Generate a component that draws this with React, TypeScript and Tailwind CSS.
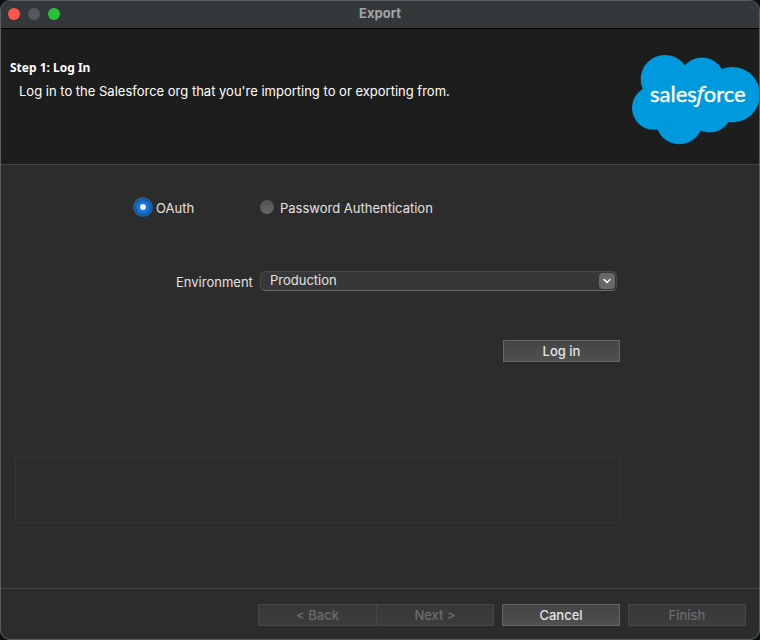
/**
 * @fileoverview The log in step of the export wizard.
 */
import React, { useState } from 'react';
import { ChevronDown } from 'lucide-react';

type AuthMethod = 'oauth' | 'password';

const radioClass =
  'appearance-none shrink-0 h-3.5 w-3.5 -translate-y-px rounded-full bg-linear-to-b from-[#525252] to-[#666666] checked:border-4 checked:border-[#1571e8] checked:bg-none checked:bg-[#f0f5fc] checked:outline-3 checked:outline-[#1d6097]';

const buttonClass =
  'h-[22px] border border-[#666666] bg-linear-to-b from-[#444444] to-[#505050] text-[13px] leading-5 font-medium text-[#e4e4e4] disabled:border-[#474747] disabled:from-[#383838] disabled:to-[#3c3c3c] disabled:text-[#6c6c6c]';

/**
 * The Salesforce cloud logo.
 */
const SalesforceLogo: React.FC = () => (
  <svg width="128" height="90" viewBox="0 0 128 90" role="img" aria-label="Salesforce" className="shrink-0">
    <g fill="#0099dd">
      <circle cx="33" cy="24.3" r="24.3" />
      <circle cx="70" cy="25.5" r="23" />
      <circle cx="100.3" cy="39.7" r="27.7" />
      <circle cx="77.5" cy="54.8" r="22.7" />
      <circle cx="47.3" cy="66" r="23.3" />
      <circle cx="21.8" cy="53" r="21.8" />
      <rect x="22" y="24" width="70" height="40" />
    </g>
    <text x="18" y="47" fill="#ffffff" stroke="#ffffff" strokeWidth="0.4" className="font-['Lato',sans-serif] text-[22px]">
      sales<tspan className="font-['Open_Sans',sans-serif] italic">f</tspan>orce
    </text>
  </svg>
);

/**
 * The window title bar with its three traffic lights.
 */
const TitleBar: React.FC = () => (
  <header className="relative flex h-7 items-start border-b border-black bg-[#34383a] px-[7px] pt-[7px]">
    <div className="flex gap-2">
      <button type="button" aria-label="Close" className="h-3 w-3 rounded-full bg-[#ff5650]" />
      <button type="button" aria-label="Minimize" disabled className="h-3 w-3 rounded-full bg-[#55585a]" />
      <button type="button" aria-label="Zoom" className="h-3 w-3 rounded-full bg-[#26c33a]" />
    </div>
    <h1 className="pointer-events-none absolute inset-x-0 top-0 text-center text-[13px] leading-6 font-bold text-[#a2a4a5]">Export</h1>
  </header>
);

const App: React.FC = () => {
  const [method, setMethod] = useState<AuthMethod>('oauth');
  const [environment, setEnvironment] = useState('Production');

  return (
    <div className="min-h-screen bg-[#0b1013] flex font-['Inter',sans-serif] text-[13px] text-[#e2e2e2]">
      <div className="flex flex-1 flex-col overflow-hidden rounded-[10px] border border-[#5b5e5f] bg-[#2c2c2c]">
        <TitleBar />

        <section className="flex h-[136px] items-start justify-between border-b border-[#444444] bg-[#1d1d1d]">
          <div className="pt-[29px] pl-[9px] text-white">
            <h2 className="font-['Noto_Sans',sans-serif] text-[12px] leading-5 font-bold">Step 1: Log In</h2>
            <p className="mt-[3px] pl-[9px] leading-5">Log in to the Salesforce org that you're importing to or exporting from.</p>
          </div>
          <div className="-mr-px pt-[26px]">
            <SalesforceLogo />
          </div>
        </section>

        <form className="flex flex-1 flex-col" onSubmit={(e) => e.preventDefault()}>
          <div className="flex flex-1 flex-col pt-[33px] pr-[139px] pl-[14px]">
            <div className="flex h-5 items-center pl-[121px]">
              <label className="flex w-[124px] items-center gap-1.5">
                <input type="radio" name="method" checked={method === 'oauth'} onChange={() => setMethod('oauth')} className={radioClass} />
                <span className="pt-0.5">OAuth</span>
              </label>
              <label className="flex items-center gap-1.5">
                <input type="radio" name="method" checked={method === 'password'} onChange={() => setMethod('password')} className={radioClass} />
                <span className="pt-0.5">Password Authentication</span>
              </label>
            </div>

            <div className="mt-[53px] flex h-5 items-center gap-2 pr-[3px] pl-[161px]">
              <label htmlFor="environment" className="w-[76px] pt-1 text-right">Environment</label>
              <div className="relative flex-1">
                <select
                  id="environment"
                  value={environment}
                  onChange={(e) => setEnvironment(e.target.value)}
                  className="block h-5 w-full appearance-none rounded-[5px] border border-[#484848] border-b-[#6a6a6a] bg-[#373737] px-[9px] pb-0.5 text-[13px] leading-4"
                >
                  <option>Production</option>
                  <option>Sandbox</option>
                </select>
                <span className="pointer-events-none absolute top-0.5 right-0.5 flex h-4 w-4 items-center justify-center rounded-sm bg-[#686868]">
                  <ChevronDown className="h-3 w-3 text-white" strokeWidth={3} />
                </span>
              </div>
            </div>

            <button type="submit" className={`${buttonClass} mt-[49px] w-[117px] self-end`}>Log in</button>

            <div role="status" className="mt-[95px] h-[66px] border border-[#343434]" />
          </div>

          <footer className="flex justify-end gap-2 border-t border-[#444444] pt-[15px] pr-[13px] pb-[13px]">
            <div className="flex">
              <button type="button" disabled className={`${buttonClass} w-[119px]`}>&lt; Back</button>
              <button type="button" disabled className={`${buttonClass} -ml-px w-[118px]`}>Next &gt;</button>
            </div>
            <button type="button" className={`${buttonClass} w-[118px]`}>Cancel</button>
            <button type="button" disabled className={`${buttonClass} w-[118px]`}>Finish</button>
          </footer>
        </form>
      </div>
    </div>
  );
};

export default App;
